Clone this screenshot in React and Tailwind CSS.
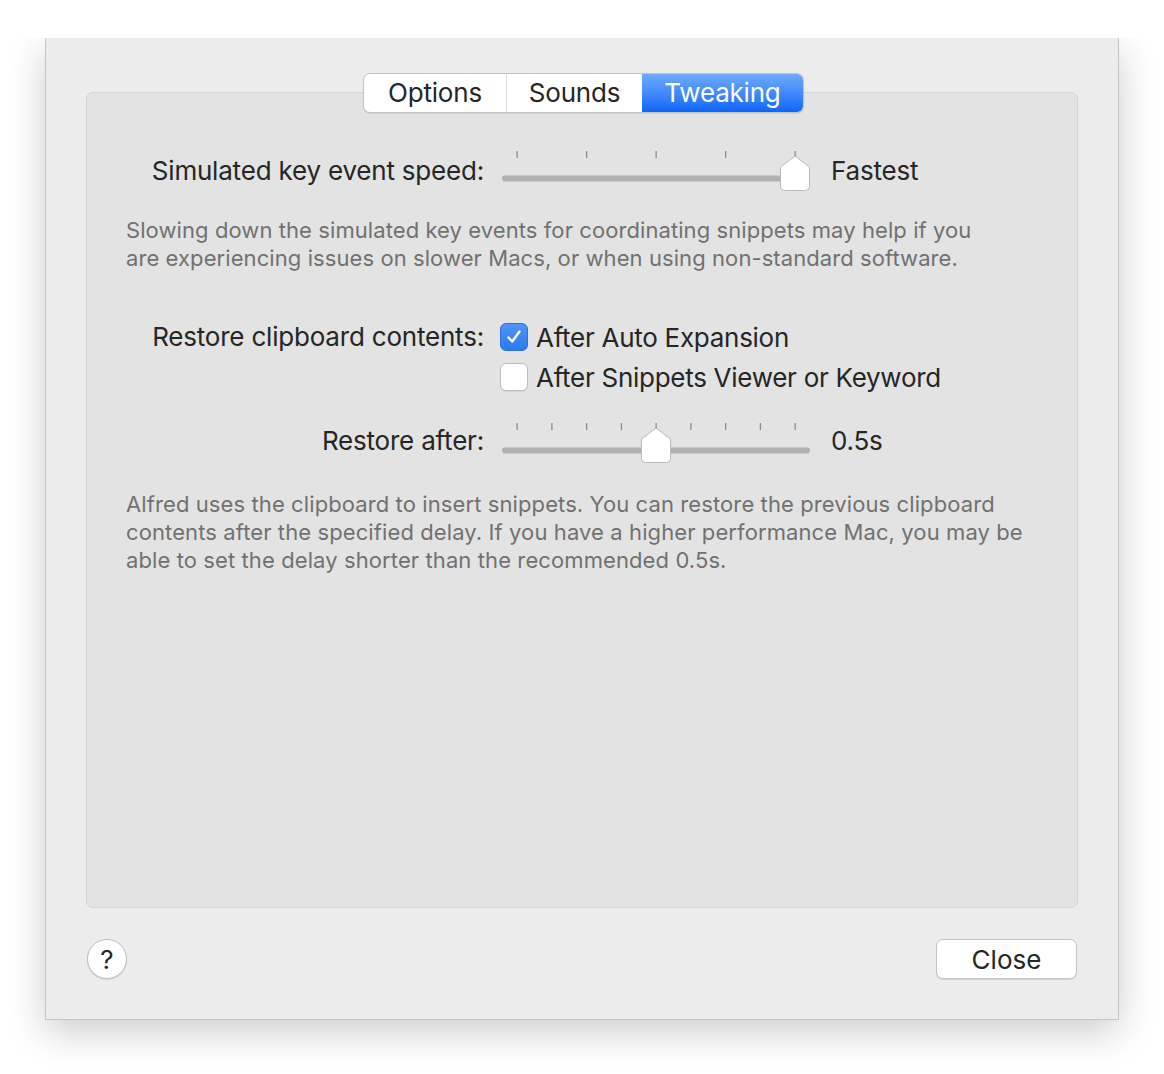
import React from 'react';

const FONT = { fontFamily: 'Inter, "Noto Sans", "Liberation Sans", sans-serif' };

function Slider({ ticks, value }) {
  // value: index of the tick the thumb sits on
  const left = 16;
  const right = 294;
  const step = (right - left) / (ticks - 1);
  const cx = left + step * value;
  return (
    <svg width="311" height="44" viewBox="0 0 311 44" className="shrink-0 block">
      {Array.from({ length: ticks }).map((_, i) => (
        <rect key={i} x={left + step * i - 0.5} y="3" width="1.3" height="7" fill="#8c8c8c" />
      ))}
      <rect x="1" y="27.5" width="308" height="6" rx="3" fill="#b1b1b1" />
      <path
        d={`M${cx} 8 L${cx + 14.5} 19 L${cx + 14.5} 38.5 Q${cx + 14.5} 42.5 ${cx + 10.5} 42.5 L${cx - 10.5} 42.5 Q${cx - 14.5} 42.5 ${cx - 14.5} 38.5 L${cx - 14.5} 19 Z`}
        fill="#ffffff"
        stroke="#b9b9b9"
        strokeWidth="1"
        strokeLinejoin="round"
      />
    </svg>
  );
}

function Checkbox({ checked }) {
  if (checked) {
    return (
      <div className="w-[28px] h-[28px] rounded-[6px] bg-gradient-to-b from-[#4d93f8] to-[#2a78f4] border border-[#2f72de] flex items-center justify-center shrink-0">
        <svg width="18" height="18" viewBox="0 0 18 18">
          <path d="M3.5 9.5 L7.2 13.5 L14.5 3.5" fill="none" stroke="#fff" strokeWidth="2.4" strokeLinecap="round" strokeLinejoin="round" />
        </svg>
      </div>
    );
  }
  return <div className="w-[28px] h-[28px] rounded-[6px] bg-white border border-[#bdbdbd] shadow-[0_1px_1px_rgba(0,0,0,0.08)] shrink-0" />;
}

export default function App() {
  return (
    <div className="bg-white w-[1164px] h-[1074px] pt-[38px]" style={FONT}>
      <div className="overflow-hidden pl-[45px] pr-[45px] pb-[54px]">
        <div className="w-[1074px] h-[982px] bg-[#ececec] border-x border-b border-[#c4c4c4] shadow-[0_12px_36px_rgba(0,0,0,0.2)] px-10 pt-[54px] flex flex-col">
          {/* panel */}
          <div className="relative h-[816px] rounded-[7px] bg-[#e3e3e3] border border-[#d4d4d4] pt-[55px] text-[#262626] tracking-[-0.2px]">
            {/* segmented control */}
            <div className="absolute top-[-20px] left-[276px] flex h-[40px] rounded-[7px] border border-[#c3c3c3] bg-white shadow-[0_1px_1px_rgba(0,0,0,0.08)] overflow-hidden text-[26px] leading-none">
              <div className="w-[143px] flex items-center justify-center border-r border-[#dcdcdc]">Options</div>
              <div className="w-[135px] flex items-center justify-center">Sounds</div>
              <div className="w-[161px] flex items-center justify-center text-white bg-gradient-to-b from-[#6eaafc] to-[#0a65fb]">Tweaking</div>
            </div>

            {/* row 1 */}
            <div className="flex h-[44px]">
              <div className="w-[397px] text-right text-[26px] leading-[32px] mt-[7px]">Simulated key event speed:</div>
              <div className="ml-[17px]">
                <Slider ticks={5} value={4} />
              </div>
              <div className="ml-[19px] text-[26px] leading-[32px] mt-[7px]">Fastest</div>
            </div>

            <p className="mt-[24px] ml-[39px] text-[22px] leading-[28px] text-[#717171] tracking-[0.08px]">
              Slowing down the simulated key events for coordinating snippets may help if you
              <br />
              are experiencing issues on slower Macs, or when using non-standard software.
            </p>

            {/* checkboxes */}
            <div className="flex mt-[45px]">
              <div className="w-[397px] text-right text-[26px] leading-[40px]">Restore clipboard contents:</div>
              <div className="ml-[16px] flex flex-col tracking-[-0.28px]">
                <div className="flex items-center h-[40px] gap-[8px]">
                  <Checkbox checked />
                  <span className="text-[26px]">After Auto Expansion</span>
                </div>
                <div className="flex items-center h-[40px] gap-[8px]">
                  <Checkbox />
                  <span className="text-[26px]">After Snippets Viewer or Keyword</span>
                </div>
              </div>
            </div>

            {/* row 2 */}
            <div className="flex h-[44px] mt-[23px]">
              <div className="w-[397px] text-right text-[26px] leading-[32px] mt-[5px]">Restore after:</div>
              <div className="ml-[17px]">
                <Slider ticks={9} value={4} />
              </div>
              <div className="ml-[19px] text-[26px] leading-[32px] mt-[5px]">0.5s</div>
            </div>

            <p className="mt-[26px] ml-[39px] text-[22px] leading-[28px] text-[#717171] tracking-[0.1px]">
              Alfred uses the clipboard to insert snippets. You can restore the previous clipboard
              <br />
              contents after the specified delay. If you have a higher performance Mac, you may be
              <br />
              able to set the delay shorter than the recommended 0.5s.
            </p>
          </div>

          {/* bottom buttons */}
          <div className="flex items-center justify-between mt-[31px] pl-[1px] pr-[1px]">
            <div className="w-[40px] h-[40px] rounded-full bg-white border border-[#bdbdbd] shadow-[0_1px_1px_rgba(0,0,0,0.1)] flex items-center justify-center text-[26px] text-[#262626]">
              ?
            </div>
            <div className="w-[141px] h-[40px] rounded-[7px] bg-white border border-[#c3c3c3] shadow-[0_1px_1px_rgba(0,0,0,0.1)] flex items-center justify-center text-[26px] text-[#262626]">
              Close
            </div>
          </div>
        </div>
      </div>
    </div>
  );
}
